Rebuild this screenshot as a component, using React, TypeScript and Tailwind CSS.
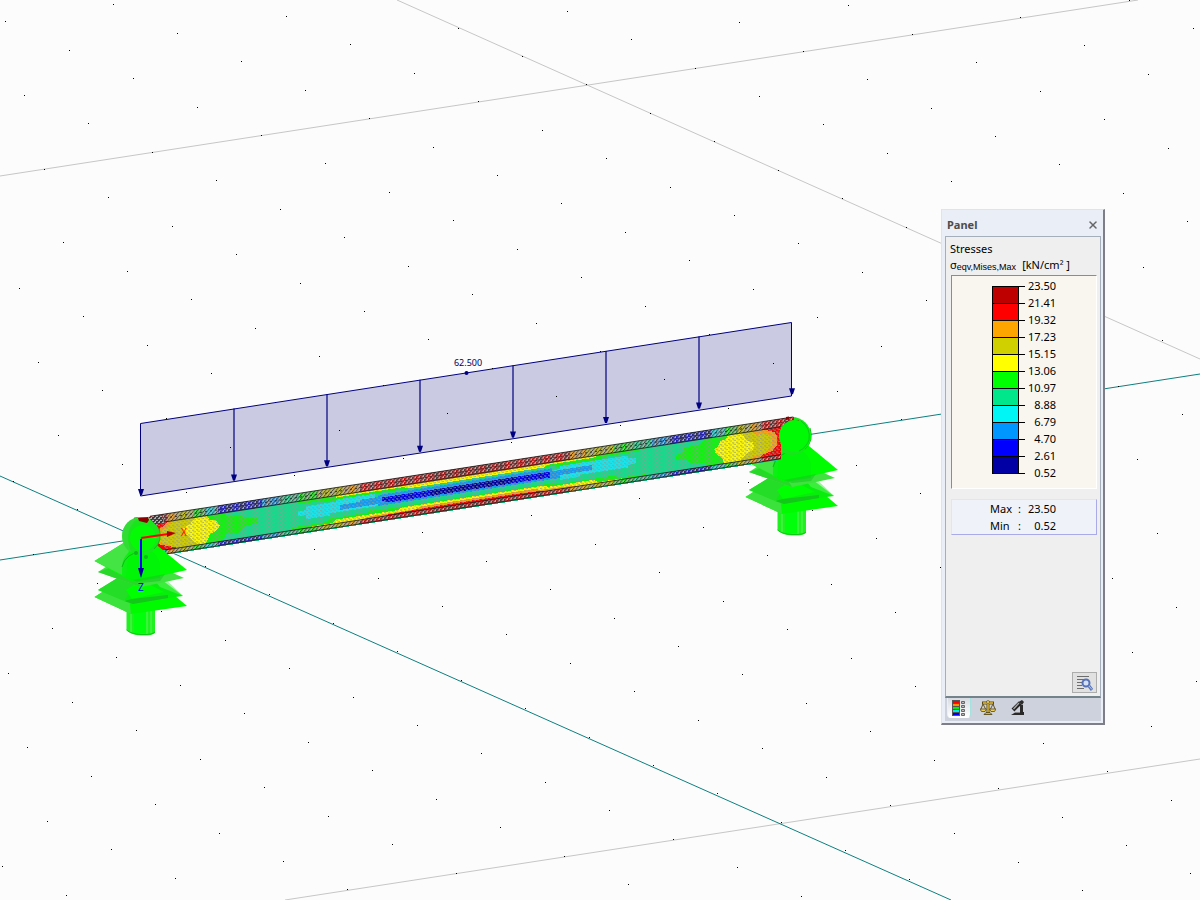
import { X } from "lucide-react";

const legend = [
  { value: "23.50", color: "bg-[#bf0000]" },
  { value: "21.41", color: "bg-[#ff0000]" },
  { value: "19.32", color: "bg-[#ffa500]" },
  { value: "17.23", color: "bg-[#d0d000]" },
  { value: "15.15", color: "bg-[#ffff00]" },
  { value: "13.06", color: "bg-[#00ff00]" },
  { value: "10.97", color: "bg-[#00e68a]" },
  { value: "8.88", color: "bg-[#00f5f5]" },
  { value: "6.79", color: "bg-[#0096ff]" },
  { value: "4.70", color: "bg-[#0000ff]" },
  { value: "2.61", color: "bg-[#0000a5]" },
  { value: "0.52", color: "" },
];

const RED = "#f50000";
const ORANGE = "#ffa010";
const OLIVE = "#d0cc00";
const YELLOW = "#fff900";
const GREEN = "#0cf50c";
const TEAL = "#10dd8c";
const CYAN = "#10e8f0";
const AZURE = "#1098f5";
const BLUE = "#0000e8";
const NAVY = "#0000a0";

// work plane points: origin + i * (108.5, -16.87) + j * (64, 28.44)
const gridPoints: { x: number; y: number }[] = [];
for (let i = -14; i <= 20; i++) {
  for (let j = -26; j <= 26; j++) {
    const x = Math.round(141 + i * 108.5 + j * 64);
    const y = Math.round(537.5 - i * 16.87 + j * 28.44);
    if (x > -400 && x < 1600 && y > -300 && y < 1200) gridPoints.push({ x, y });
  }
}

// colour runs along the flanges, [start x, colour]
const flange: [number, string][] = [
  [150, RED],
  [168, ORANGE],
  [178, OLIVE],
  [194, GREEN],
  [206, CYAN],
  [218, BLUE],
  [262, AZURE],
  [280, TEAL],
  [300, GREEN],
  [318, OLIVE],
  [344, ORANGE],
  [360, RED],
  [430, "#c00000"],
  [505, RED],
  [570, ORANGE],
  [586, OLIVE],
  [614, GREEN],
  [634, TEAL],
  [652, AZURE],
  [670, BLUE],
  [712, CYAN],
  [726, GREEN],
  [738, OLIVE],
  [752, ORANGE],
  [762, RED],
  [794, RED],
];

const webContours: [string, string][] = [
  // left end
  [GREEN, "190,8 222,8 228,12 240,12 246,16 258,19 258,23 246,25 240,30 226,30 222,36 190,36"],
  [YELLOW, "180,8 206,8 210,13 216,14 220,20 216,25 210,27 206,36 184,36"],
  [OLIVE, "150,8 196,8 190,14 182,17 184,22 190,27 198,36 160,36"],
  [ORANGE, "150,8 172,8 168,13 160,17 160,27 168,31 176,36 160,36"],
  [RED, "140,8 168,8 164,11 160,14 156,24 160,30 170,33 178,36 150,36"],
  // upper and lower bands at midspan
  [GREEN, "298,8 650,8 640,10 605,11 600,13 560,13 555,15 370,15 365,13 325,13 320,11 298,11"],
  [YELLOW, "336,8 598,8 594,10 548,10 544,12 408,12 404,10 336,10"],
  [OLIVE, "350,7 590,7 580,8 540,9 400,9 350,8"],
  [ORANGE, "360,7 572,7 572,8 520,9 420,9 360,8"],
  [GREEN, "292,37 650,37 645,34 620,34 616,31 560,31 556,28 370,28 366,30 330,30 326,33 292,33"],
  [YELLOW, "312,37 622,37 622,35 598,35 594,32 548,32 544,30 402,30 398,32 336,32 332,35 312,35"],
  [ORANGE, "358,37 580,37 576,35 540,34 536,32 420,32 416,34 370,34"],
  [RED, "386,37 546,37 542,35 510,34 430,34 388,35"],
  // core
  [CYAN, "298,18 306,18 306,14 336,14 336,12 375,12 375,16 560,16 560,13 628,13 628,16 636,17 636,22 628,23 628,25 580,25 580,27 375,27 375,25 330,25 330,27 306,27 306,23 298,23"],
  [TEAL, "375,12 555,12 555,16 375,16"],
  [TEAL, "375,25 560,25 560,29 375,29"],
  [AZURE, "340,18 360,18 360,16 378,16 378,14 552,14 552,17 592,17 592,22 560,22 560,25 378,25 378,23 340,23"],
  [BLUE, "382,17 550,17 550,23 388,23 382,20"],
  [NAVY, "430,17 516,17 510,23 430,23"],
  // right end
  [GREEN, "676,20 684,18 684,14 700,13 704,9 730,8 730,36 708,36 704,32 690,30 686,26 676,25"],
  [YELLOW, "714,20 718,18 720,13 726,12 728,8 748,8 752,12 756,36 724,36 722,30 716,25"],
  [OLIVE, "742,8 781,8 781,36 740,36 746,30 754,26 754,20 746,16"],
  [ORANGE, "752,8 781,8 781,36 748,36 756,33 766,31 772,25 772,17 766,13 756,12"],
  [RED, "764,8 781,8 781,36 760,36 762,33 772,31 777,26 777,16 774,12"],
];

function Support({ nodes = false }: { nodes?: boolean }) {
  return (
    <g>
      <path d="M126.500 598V630Q131 635 141 635.500Q152 636 155 633V598Z" fill="#20f020" />
      <path d="M131 600V632M135 600V633M147 600V634M151 600V634" stroke="#55f555" fill="none" />
      <path d="M134 600H146V633H134Z" fill="#00ff0a" />
      <path d="M126.500 630Q131 634 141 634.500Q152 635 155 632" stroke="#10c818" fill="none" />

      <path d="M94.500 597 141 567 187 606 131 614Z" fill="#00fb00" />
      <path d="M94.500 597 127 577 131 614Z" fill="#3be23b" />
      <path d="M98 590 141 564 183 596 132 603Z" fill="#08ed0c" />
      <path d="M98 590 130 570 141 577 124 601Z" fill="#24dd26" />
      <path d="M126 590 141 580 164 592 132 599Z" fill="#00ff00" />
      <path d="M141 564 158 572 183 596 160 587Z" fill="#5cf05c" fillOpacity=".6" />
      <path d="M124 601 132 599 168 595 168 598 133 604Z" fill="#12c818" />

      <path d="M98 572 128 553 184 578 141 587Z" fill="#3fe23f" />
      <path d="M98 572 126 562 141 587Z" fill="#28d829" />
      <path d="M94.500 561 141 532 187 570 133 582Z" fill="#00fc00" />
      <path d="M94.500 561 130 539 126 577Z" fill="#43e443" />
      <path d="M122 575V567A19 19 0 0 1 160 567V578L133 582Z" fill="#00f207" fillOpacity=".8" />
      <path d="M122 567A19 19 0 0 1 141 552" stroke="#12b819" fill="none" />
      <path d="M122 576 133 580 165 574 160 581 141 583Z" fill="#14c81c" fillOpacity=".55" />

      <circle cx="141" cy="536" r="19" fill="#18e51b" />
      <path d="M141 517A19 19 0 0 0 122 536Q123 548 132 553Q126 543 129 530Q133 520 141 517Z" fill="#42d744" fillOpacity=".65" />
      <circle cx="143" cy="538" r="13" fill="#00ff00" fillOpacity=".8" />
      <path d="M159 528Q163 541 154 549" stroke="#10bd16" fill="none" />
      {nodes && (
        <>
          <circle cx="136" cy="553" r="2" fill="#10b81c" />
          <circle cx="146" cy="557" r="2" fill="#10b81c" />
        </>
      )}
    </g>
  );
}

function Beam() {
  return (
    <g transform="matrix(1 -0.1545 0 1 0 539.5)">
      <g shapeRendering="crispEdges">
        <polygon points="150,0 792,0 797,4 781,8 781,41 165,41 150,30" fill={TEAL} />
        {webContours.map(([color, points]) => (
          <polygon key={points} points={points} fill={color} />
        ))}
        <polygon points="150,8 781,8 781,36 165,36" fill="url(#mesh)" />
      </g>
      {flange.slice(0, -1).map(([x, color], i) => (
        <g key={x} fill={color}>
          <rect x={x} y="0" width={flange[i + 1][0] - x} height="8" />
          {x > 160 && <rect x={x} y="36" width={Math.min(flange[i + 1][0], 781) - x} height="4" />}
        </g>
      ))}
      <path d="M150 0H793V8H150ZM165 36H781V40H165Z" fill="#999" fillOpacity=".2" />
      <path d="M150 0H793V8H150ZM165 36H781V40H165Z" fill="url(#flangeMesh)" />
      <path d="M150 0H793M150 8H781M165 36H781M165 40H781" stroke="#181818" strokeOpacity=".8" fill="none" />
      <path d="M150 4H790" stroke="#333" strokeDasharray="2 3" fill="none" />
      <path d="M134 -1h4v3h-4ZM786 -1h3v3h-3ZM794 4h5v4h-5Z" fill="#900000" />
    </g>
  );
}

function Load() {
  return (
    <g>
      <path d="M140.500 423.500 791.500 322.500V396L140.500 496Z" fill="#cbcae3" stroke="#000080" />
      {[0, 1, 2, 3, 4, 5, 6, 7].map((n) => {
        const x = 141 + n * 93;
        const y = 423 - n * 14.4;
        return (
          <g key={n}>
            {n > 0 && n < 7 && <path d={`M${x} ${y}v72`} stroke="#000080" strokeWidth="2" strokeOpacity=".6" />}
            <path d={`M${x - 3} ${y + 66}h6l-2 6h-2z`} fill="#000080" />
          </g>
        );
      })}
      <circle cx="466.500" cy="373" r="2" fill="#000080" />
      <text x="468" y="366" textAnchor="middle" className="fill-[#000060] text-[9px]">
        62.500
      </text>
    </g>
  );
}

function Scene() {
  return (
    <svg
      className="block h-full w-full"
      viewBox="0 0 1200 900"
      preserveAspectRatio="xMinYMin slice"
      role="img"
      aria-label="Beam stress model"
    >
      <defs>
        <pattern id="mesh" width="4" height="4" patternUnits="userSpaceOnUse">
          <path d="M0 0h2v1h-2ZM2 2h2v1h-2ZM1 1h1v1h-1Z" fill="#8f9a90" fillOpacity=".75" />
        </pattern>
        <pattern id="flangeMesh" width="4" height="4" patternUnits="userSpaceOnUse">
          <path d="M0 0h2v1h-2ZM2 2h2v1h-2ZM3 1h1v1h-1Z" fill="#b0b0b0" />
          <path d="M2 0h1v1h-1ZM0 2h1v1h-1ZM1 1h1v1h-1ZM3 3h1v1h-1Z" fill="#333" />
        </pattern>
      </defs>

      <g stroke="#c6c6c6" fill="none">
        <path d="M0 176 1138 0M397 0 1200 359M285 900 1200 759" />
      </g>
      <g stroke="#0c7f7f" fill="none">
        <path d="M0 560 1200 374M0 476 951 900" />
      </g>

      <Load />
      <g shapeRendering="crispEdges">
        {gridPoints.map(({ x, y }) => (
          <rect key={`${x}-${y}`} x={x} y={y} width="1" height="1" />
        ))}
      </g>

      <g transform="translate(651 -100)">
        <Support />
      </g>
      <Beam />
      <circle cx="795" cy="436" r="16" fill="#00fa05" />
      <path d="M801 421Q811 428 809 440Q806 448 799 451" stroke="#10c818" fill="none" />
      <Support nodes />
      <path d="M138 518 148 517 149 520 147 523 139 521Z" fill="#8c0000" />
      <path d="M148 517 162 515 164 523 156 525Z" fill="#d01010" />
      <path d="M148 517 162 515 164 523 156 525Z" fill="url(#flangeMesh)" />

      <path d="M141 538 168 534" stroke="#ff0000" strokeWidth="2" />
      <path d="M167 531 176 533 167 537Z" fill="#b00000" />
      <path d="M141 539V570" stroke="#0000ff" strokeWidth="2" />
      <path d="M138 568H144L141 578Z" fill="#0000a0" />
      <text x="181" y="536" className="fill-[#ff0000] text-[10px]">X</text>
      <text x="138" y="591" className="fill-[#0000ff] text-[10px]">Z</text>
    </svg>
  );
}

function ColorScaleIcon() {
  const colors = ["#ff0000", "#ff9000", "#00f000", "#00e8f0", "#0000ff"];
  return (
    <svg width="14" height="16" viewBox="0 0 14 16" aria-hidden="true">
      <rect width="8" height="16" fill="#555" />
      {colors.map((color, i) => (
        <rect key={color} x="1" y={1 + i * 3} width="6" height="2" fill={color} />
      ))}
      <path d="M9.500 1.500h3v2h-3zM9.500 5.500h3v2h-3zM9.500 9.500h3v2h-3zM9.500 13.500h3v2h-3z" fill="#bbb" stroke="#666" />
    </svg>
  );
}

function ScalesIcon() {
  return (
    <svg width="16" height="16" viewBox="0 0 16 16" fill="none" aria-hidden="true">
      <path d="M8 1V13M2 3H14" stroke="#5d4a12" strokeWidth="3" />
      <path d="M3 3H13M8 2V13" stroke="#e2bd3d" strokeWidth="1.400" />
      <path d="M3 4 1 9M3 4 5.500 9M13 4 10.500 9M13 4 15 9" stroke="#665522" />
      <path d="M0 9H6.500L5 11.500H1.500ZM9.500 9H16L14.500 11.500H11Z" fill="#efcf55" stroke="#5a4710" strokeWidth=".8" />
      <path d="M4 14.500H12L10 12.500H6Z" fill="#d8b434" stroke="#4c3c0c" strokeWidth=".8" />
      <circle cx="8" cy="2" r="1.500" fill="#f2d868" stroke="#5a4710" strokeWidth=".6" />
    </svg>
  );
}

function MicroscopeIcon() {
  return (
    <svg width="16" height="16" viewBox="0 0 16 16" fill="none" aria-hidden="true">
      <path d="M3 10 10 3" stroke="#222" strokeWidth="4" />
      <path d="M3.500 9 9 3" stroke="#a5a5a5" strokeWidth="1.400" />
      <path d="M8.500 2 12 0 14 2 12 5Z" fill="#2b2b2b" />
      <path d="M11.500 5V13" stroke="#2a2a2a" strokeWidth="3" />
      <path d="M1 15H14V12H6Z" fill="#2a2a2a" />
      <path d="M5 12.500H10" stroke="#888" />
    </svg>
  );
}

function Panel() {
  return (
    <aside className="absolute left-[941px] top-[209px] flex h-[516px] w-[164px] flex-col border border-b-2 border-r-2 border-b-[#7d7e88] border-l-[#dfe4ec] border-r-[#7d7e88] border-t-[#dfe4ec] bg-[#e9eef7] pb-[2px] pl-[3px] pr-[2px] text-[11px] text-black">
      <header className="flex h-[26px] items-center justify-between pl-0.5 pr-0.5 pt-1">
        <h1 className="font-bold text-[#4c4c4c]">Panel</h1>
        <button type="button" aria-label="Close" className="text-[#666]">
          <X size={12} strokeWidth={3} />
        </button>
      </header>

      <section className="flex flex-1 flex-col border border-b-2 border-[#a5afbb] border-b-[#74828a] bg-[#efefef] pl-1 pr-[3px]">
        <h2 className="mt-1 h-4 leading-4">Stresses</h2>
        <p className="flex h-[18px] whitespace-nowrap leading-4">
          <span>σ</span>
          <span className="pt-0.5 font-['Liberation_Sans'] text-[9px]">eqv,Mises,Max</span>
          <span className="ml-1.5">[kN/cm² ]</span>
        </p>

        <div className="ml-px flex h-[214px] border border-b-white border-l-[#8c8c8c] border-r-white border-t-[#8c8c8c] bg-[#f9f6ef] pl-10">
          <div className="mt-[10px] h-[188px] w-[27px] border border-t-0 border-black">
            {legend.slice(0, -1).map(({ value, color }) => (
              <div key={value} className={`h-[17px] border-t border-black ${color}`} />
            ))}
          </div>
          <ul className="pt-px">
            {legend.map(({ value }) => (
              <li key={value} className="flex h-[17px] items-center">
                <span className="mt-[2px] h-px w-1.5 bg-black" />
                <span className="w-[31px] text-right leading-[17px]">{value}</span>
              </li>
            ))}
          </ul>
        </div>

        <dl className="ml-px mt-2.5 grid h-9 grid-cols-[28px_12px_26px] content-center justify-start border border-b-[#aaaae6] border-l-[#dce6f5] border-r-[#aaaae6] border-t-[#dce6f5] bg-[#eff3f9] pl-[38px] leading-[17px]">
          <dt>Max</dt>
          <dd>:</dd>
          <dd className="flex justify-end">23.50</dd>
          <dt>Min</dt>
          <dd>:</dd>
          <dd className="flex justify-end">0.52</dd>
        </dl>

        <button
          type="button"
          aria-label="Panel settings"
          className="mb-[3px] ml-auto mt-auto flex h-[21px] w-[25px] items-center justify-center border border-[#adadad] bg-[#e1e1e1]"
        >
          <svg width="18" height="18" viewBox="0 0 18 18" fill="none" aria-hidden="true">
            <path d="M1 2.500H13M1 5.500H8M1 8.500H6M1 11.500H6M1 14.500H8" stroke="#6d6d6d" />
            <circle cx="10" cy="9" r="3.500" fill="#d5e0f5" stroke="#5671b8" strokeWidth="2" />
            <path d="M13 12 16 16" stroke="#5a76ba" strokeWidth="3" />
            <path d="M13 12 16 15.500" stroke="#b5c5e8" />
          </svg>
        </button>
      </section>

      <nav className="flex h-[23px] bg-[#cdd2dc] pl-0.5">
        <button
          type="button"
          aria-label="Color scale"
          className="flex h-5 w-6 items-center justify-center rounded-b border-x border-b border-l-[#e8f2f2] border-b-white border-r-[#a5e2df] bg-linear-to-b from-[#d8dce2] to-white"
        >
          <ColorScaleIcon />
        </button>
        <button type="button" aria-label="Factors" className="ml-0.5 flex h-5 w-[30px] items-center justify-center">
          <ScalesIcon />
        </button>
        <button type="button" aria-label="Filter" className="flex h-5 w-[30px] items-center justify-center">
          <MicroscopeIcon />
        </button>
      </nav>
    </aside>
  );
}

function App() {
  return (
    <main className="relative h-screen w-full overflow-hidden bg-[#fcfcfc] font-['Noto_Sans','Liberation_Sans',sans-serif]">
      <Scene />
      <Panel />
    </main>
  );
}

export default App;
